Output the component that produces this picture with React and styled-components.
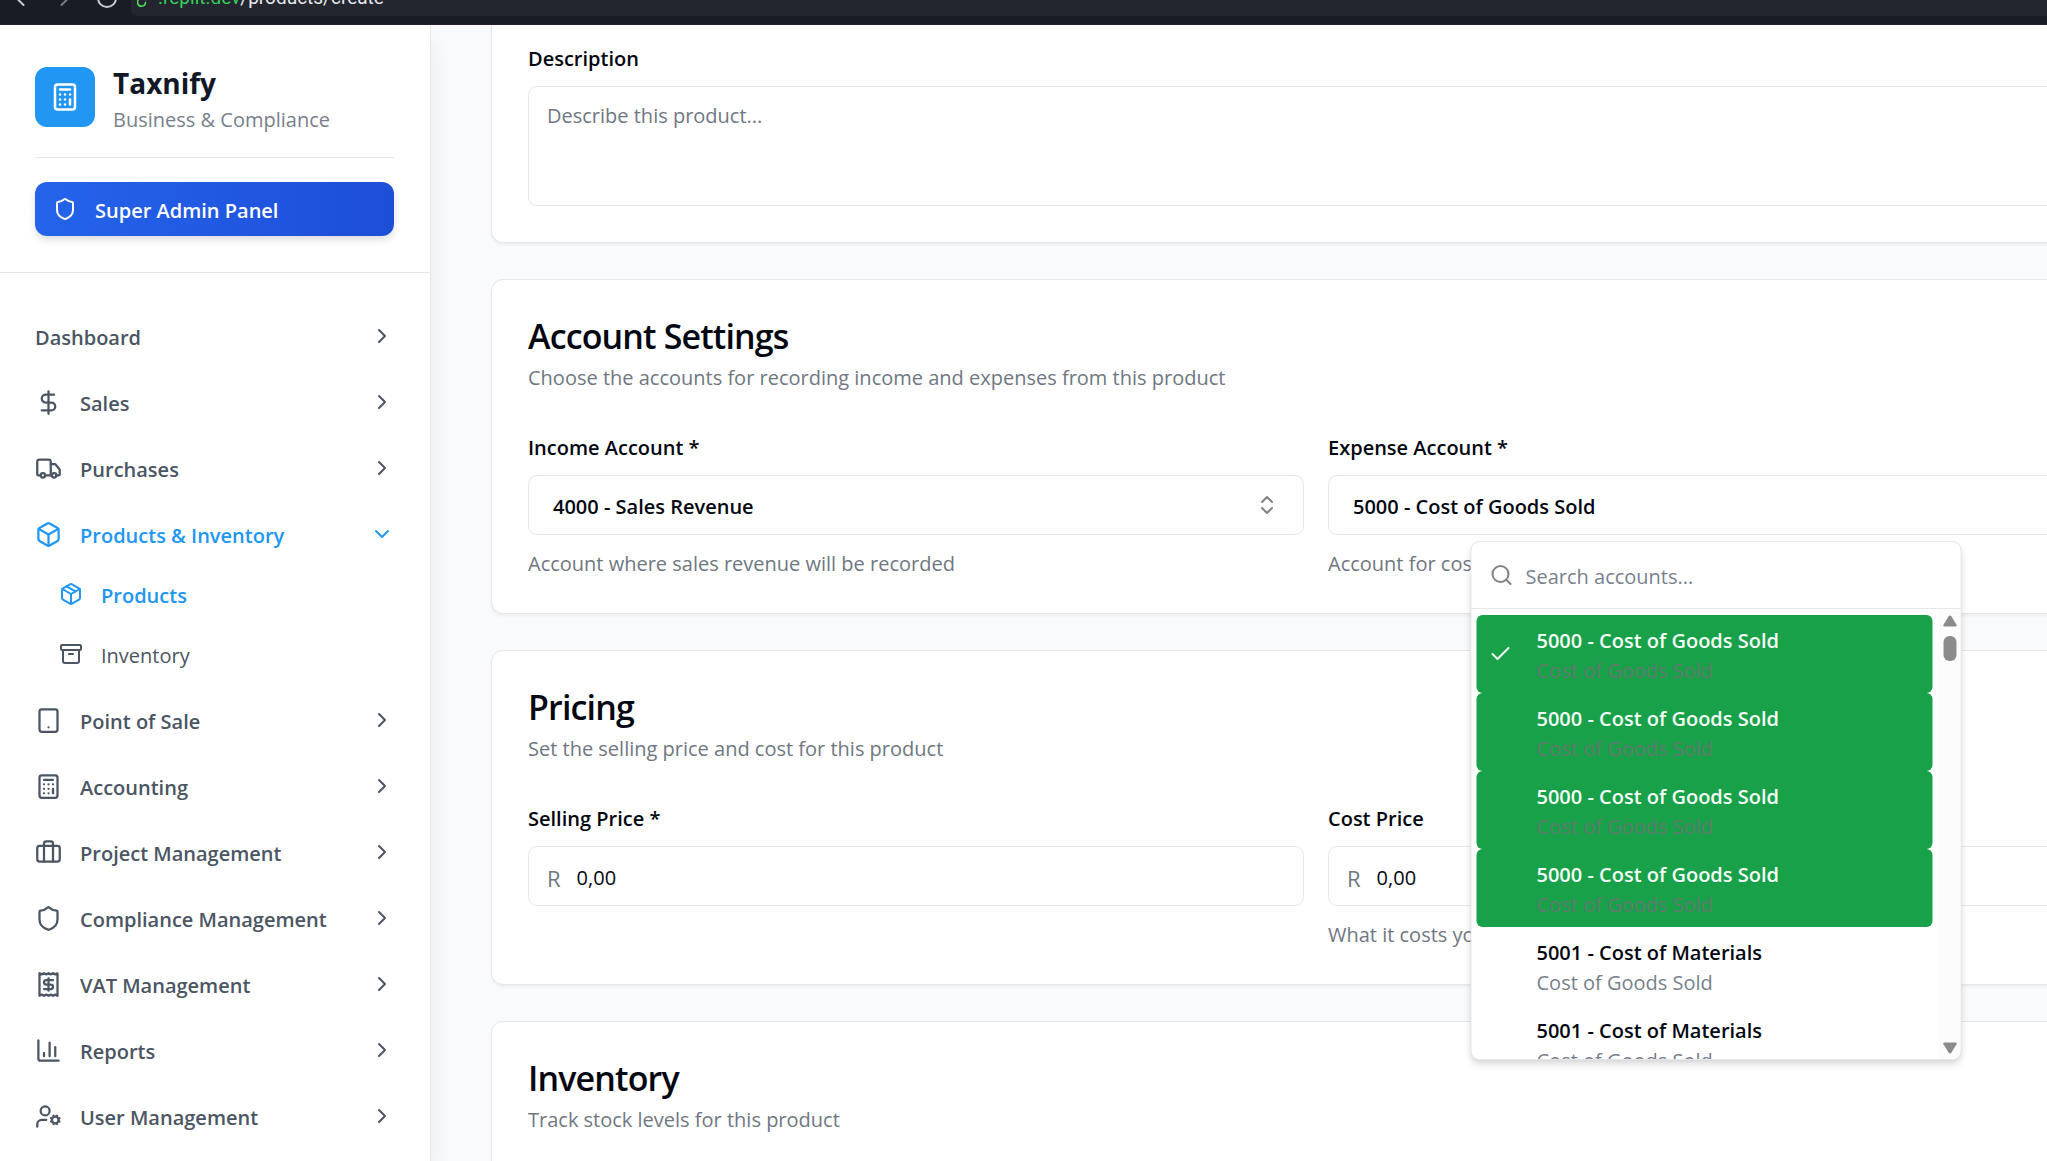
import React from "react";
import styled, { createGlobalStyle, css } from "styled-components";
import {
  Archive, Box, Briefcase, Calculator, ChartColumn, Check, ChevronDown, ChevronLeft,
  ChevronRight, ChevronsUpDown, DollarSign, Package, Receipt, RotateCw, Search,
  Shield, Tablet, Truck, UserCog,
} from "lucide-react";

const color = {
  primary: "#2196f3",
  ink: "#030711",
  heading: "#111827",
  nav: "#4b5563",
  muted: "#6f7782",
  line: "#e5e7eb",
  page: "#f8fafc",
  green: "#18a149",
};

const GlobalStyle = createGlobalStyle`
  *, *::before, *::after { box-sizing: border-box; }
  body {
    margin: 0;
    overflow: hidden;
    background: ${color.page};
    color: ${color.ink};
    font-family: "Open Sans", "Noto Sans", sans-serif;
    font-size: 20px;
    line-height: 30px;
  }
  h1, h2, p, ul { margin: 0; padding: 0; }
  ul { list-style: none; }
  a { color: inherit; text-decoration: none; }
  button, input, textarea { font: inherit; color: inherit; margin: 0; }
  svg { flex: none; display: block; }
`;

const Page = styled.div`
  display: flex;
  flex-direction: column;
  height: 100vh;
  overflow: hidden;
`;

/* Browser chrome */
const BrowserBar = styled.header`
  display: flex;
  align-items: flex-end;
  flex: none;
  height: 25px;
  padding-bottom: 8px;
  background: #1a1c25;
  border-bottom: 1px solid #2a2033;
  overflow: hidden;
`;

const BrowserButtons = styled.div`
  display: flex;
  align-items: center;
  justify-content: space-between;
  flex: none;
  width: 131px;
  height: 36px;
  padding: 0 12px 0 6px;
  color: #c9cbd1;
`;

const BrowserButton = styled.button`
  padding: 0;
  border: 0;
  background: none;
  opacity: ${(p) => (p.$dim ? 0.55 : 1)};
`;

const Address = styled.div`
  display: flex;
  align-items: center;
  flex: 1;
  gap: 8px;
  height: 36px;
  padding-left: 6px;
  border-radius: 6px 0 0 6px;
  background: #24262f;
  color: #e8eaed;
  font-family: Roboto, "Open Sans", sans-serif;
  font-size: 19px;
  svg { color: #4ade5e; }
`;

const Host = styled.span`
  color: #35d05c;
`;

/* Sidebar */
const Body = styled.div`
  display: flex;
  flex: 1;
  min-height: 0;
`;

const Sidebar = styled.aside`
  position: relative;
  z-index: 1;
  flex: none;
  width: 431px;
  background: #fff;
  border-right: 1px solid ${color.line};
  box-shadow: 0 15px 24px -4px rgba(0, 0, 0, 0.1);
`;

const SidebarHead = styled.div`
  padding: 36px 36px 36px 35px;
  border-bottom: 1px solid ${color.line};
`;

const Brand = styled.div`
  display: flex;
  align-items: center;
  gap: 18px;
  padding: 0 0 24px;
  border-bottom: 1px solid ${color.line};
`;

const Logo = styled.div`
  display: grid;
  place-items: center;
  width: 60px;
  height: 60px;
  border-radius: 12px;
  background: ${color.primary};
  color: #fff;
`;

const BrandName = styled.h1`
  padding-top: 2px;
  color: ${color.heading};
  font-size: 28px;
  line-height: 40px;
  font-weight: 700;
`;

const BrandNote = styled.p`
  padding-top: 4px;
  color: #787f8c;
  line-height: 26px;
`;

/* Text beside an icon or inside a control, seated slightly below the centre line */
const Caption = styled.span`
  flex: ${(p) => (p.$fill ? 1 : "none")};
  padding-top: 3px;
`;

const AdminButton = styled.button`
  display: flex;
  align-items: center;
  gap: 18px;
  width: 100%;
  height: 54px;
  margin-top: 24px;
  padding: 0 18px;
  border: 0;
  border-radius: 12px;
  background: linear-gradient(90deg, #2563eb, #1d4ed8);
  box-shadow: 0 4px 8px -1px rgba(0, 0, 0, 0.16);
  color: #fff;
  font-weight: 600;
`;

const Nav = styled.nav`
  padding: 30px 36px 0 35px;
`;

const itemTone = css`
  color: ${(p) => (p.$active ? color.primary : color.nav)};
`;

const NavItem = styled.a`
  display: flex;
  align-items: center;
  gap: 18px;
  height: 66px;
  font-weight: 600;
  ${itemTone}
`;

const SubList = styled.ul`
  display: flex;
  flex-direction: column;
  gap: 6px;
  padding: 0 0 6px 24px;
`;

const SubItem = styled.a`
  display: flex;
  align-items: center;
  gap: 18px;
  height: 54px;
  font-weight: ${(p) => (p.$active ? 600 : 400)};
  ${itemTone}
`;

/* Form */
const Main = styled.main`
  flex: 1;
  min-width: 0;
  padding-left: 60px;
  overflow: hidden;
`;

const Form = styled.form`
  display: flex;
  flex-direction: column;
  gap: 36px;
  min-width: 1650px;
`;

const Card = styled.section`
  padding: 36px;
  background: #fff;
  border: 1px solid ${color.line};
  border-radius: 12px;
  box-shadow: 0 2px 3px rgba(0, 0, 0, 0.05);
  ${(p) => p.$continued && css`
    padding-top: 13px;
    border-top: 0;
    border-top-left-radius: 0;
    border-top-right-radius: 0;
  `}
`;

const CardHead = styled.div`
  display: flex;
  flex-direction: column;
  gap: 9px;
  padding: 2px 0 34px;
`;

const CardTitle = styled.h2`
  font-size: 34px;
  line-height: 36px;
  font-weight: 600;
  letter-spacing: -0.025em;
`;

const Muted = styled.p`
  color: ${color.muted};
`;

const Help = styled(Muted)`
  padding-top: 4px;
  line-height: 26px;
`;

const Columns = styled.div`
  display: grid;
  grid-template-columns: 1fr 1fr;
  gap: 24px;
`;

const Field = styled.div`
  position: relative;
  display: flex;
  flex-direction: column;
  gap: 12px;
`;

const Label = styled.label`
  padding-top: 6px;
  font-weight: 600;
`;

const boxed = css`
  border: 1px solid ${color.line};
  border-radius: 9px;
  background: #fff;
`;

const TextArea = styled.textarea`
  ${boxed}
  display: block;
  width: 100%;
  height: 120px;
  padding: 14px 18px;
  resize: none;
  &::placeholder { color: ${color.muted}; opacity: 1; }
`;

const Combo = styled.button`
  ${boxed}
  display: flex;
  align-items: center;
  justify-content: space-between;
  height: 60px;
  padding: 0 24px;
  font-weight: 600;
  svg { opacity: 0.5; }
`;

const MoneyBox = styled.div`
  ${boxed}
  display: flex;
  align-items: center;
  gap: 16px;
  height: 60px;
  padding: 3px 18px 0;
`;

const Currency = styled.span`
  color: ${color.muted};
  font-size: 22px;
`;

const MoneyInput = styled.input`
  flex: 1;
  min-width: 0;
  padding: 0;
  border: 0;
  background: none;
  outline: none;
`;

/* Account picker */
const Popover = styled.div`
  position: absolute;
  z-index: 2;
  top: 114px;
  left: 50%;
  display: flex;
  flex-direction: column;
  width: 491px;
  height: 519px;
  transform: translateX(-50%);
  border: 1px solid ${color.line};
  border-radius: 9px;
  background: #fff;
  box-shadow: 0 6px 9px -1px rgba(0, 0, 0, 0.1), 0 3px 6px -2px rgba(0, 0, 0, 0.1);
  overflow: hidden;
`;

const SearchRow = styled.div`
  display: flex;
  align-items: center;
  gap: 12px;
  flex: none;
  height: 67px;
  padding: 0 18px;
  border-bottom: 1px solid ${color.line};
  svg { opacity: 0.5; }
`;

const SearchInput = styled.input`
  flex: 1;
  min-width: 0;
  padding: 3px 0 0;
  border: 0;
  outline: none;
  background: none;
  &::placeholder { color: #787f8c; opacity: 1; }
`;

const ListArea = styled.div`
  display: grid;
  grid-template-columns: 1fr 22px;
  flex: 1;
  min-height: 0;
`;

const OptionList = styled.ul`
  min-height: 0;
  padding: 6px 6px 0 5px;
  overflow: hidden;
`;

const Option = styled.li`
  display: grid;
  grid-template-columns: 24px 1fr;
  align-items: center;
  column-gap: 24px;
  height: 78px;
  padding: 0 12px;
  border-radius: 6px;
  background: ${(p) => (p.$highlighted ? color.green : "transparent")};
  color: ${(p) => (p.$highlighted ? "#f5fff8" : color.ink)};
`;

const OptionText = styled.div`
  grid-column: 2;
  grid-row: 1;
  padding-top: 3px;
`;

const OptionName = styled.div`
  font-weight: 600;
`;

const OptionKind = styled.div`
  color: ${(p) => (p.$highlighted ? "#607a70" : "#787f8c")};
`;

const ScrollRail = styled.div`
  display: flex;
  flex-direction: column;
  align-items: center;
  padding: 6px 0 5px;
  background: #fcfcfc;
`;

const Thumb = styled.div`
  width: 13px;
  height: 25px;
  margin: 9px 0 auto;
  border-radius: 6px;
  background: #8b8b8b;
`;

const navItems = [
  { text: "Dashboard" },
  { text: "Sales", icon: DollarSign },
  { text: "Purchases", icon: Truck },
  {
    text: "Products & Inventory",
    icon: Box,
    active: true,
    children: [
      { text: "Products", icon: Package, active: true },
      { text: "Inventory", icon: Archive },
    ],
  },
  { text: "Point of Sale", icon: Tablet },
  { text: "Accounting", icon: Calculator },
  { text: "Project Management", icon: Briefcase },
  { text: "Compliance Management", icon: Shield },
  { text: "VAT Management", icon: Receipt },
  { text: "Reports", icon: ChartColumn },
  { text: "User Management", icon: UserCog },
];

const accounts = [
  { name: "5000 - Cost of Goods Sold", highlighted: true, selected: true },
  { name: "5000 - Cost of Goods Sold", highlighted: true },
  { name: "5000 - Cost of Goods Sold", highlighted: true },
  { name: "5000 - Cost of Goods Sold", highlighted: true },
  { name: "5001 - Cost of Materials" },
  { name: "5001 - Cost of Materials" },
];

function Chrome() {
  return (
    <BrowserBar>
      <BrowserButtons>
        <BrowserButton type="button" aria-label="Back"><ChevronLeft size={28} strokeWidth={1.7} /></BrowserButton>
        <BrowserButton type="button" aria-label="Forward" $dim><ChevronRight size={28} strokeWidth={1.7} /></BrowserButton>
        <BrowserButton type="button" aria-label="Reload"><RotateCw size={24} strokeWidth={2} /></BrowserButton>
      </BrowserButtons>
      <Address>
        <svg width="13" height="20" viewBox="0 0 13 20" fill="none" stroke="currentColor" strokeWidth="1.6" strokeLinecap="round">
          <path d="M3 10.500a4 4 0 1 0 5.500 4" />
          <path d="M8.500 11.500l3 -1" />
        </svg>
        <span><Host>.replit.dev</Host>/products/create</span>
      </Address>
    </BrowserBar>
  );
}

function NavEntry({ item }) {
  const Icon = item.icon;
  const Arrow = item.children ? ChevronDown : ChevronRight;
  return (
    <li>
      <NavItem href="#" $active={item.active}>
        {Icon && <Icon size={27} />}
        <Caption $fill>{item.text}</Caption>
        <Arrow size={24} />
      </NavItem>
      {item.children && (
        <SubList>
          {item.children.map((sub) => (
            <li key={sub.text}>
              <SubItem href="#" $active={sub.active}>
                <sub.icon size={24} />
                <Caption>{sub.text}</Caption>
              </SubItem>
            </li>
          ))}
        </SubList>
      )}
    </li>
  );
}

function CardHeading({ title, note }) {
  return (
    <CardHead>
      <CardTitle>{title}</CardTitle>
      <Muted>{note}</Muted>
    </CardHead>
  );
}

function ComboField({ id, label, value, help, children }) {
  return (
    <Field>
      <Label htmlFor={id}>{label}</Label>
      <Combo id={id} type="button" aria-haspopup="listbox">
        <Caption>{value}</Caption>
        <ChevronsUpDown size={24} />
      </Combo>
      <Help>{help}</Help>
      {children}
    </Field>
  );
}

function MoneyField({ id, label, help }) {
  return (
    <Field>
      <Label htmlFor={id}>{label}</Label>
      <MoneyBox>
        <Currency>R</Currency>
        <MoneyInput id={id} defaultValue="0,00" inputMode="decimal" />
      </MoneyBox>
      {help && <Help>{help}</Help>}
    </Field>
  );
}

function AccountPicker() {
  return (
    <Popover>
      <SearchRow>
        <Search size={24} />
        <SearchInput aria-label="Search accounts" placeholder="Search accounts..." />
      </SearchRow>
      <ListArea>
        <OptionList role="listbox" aria-label="Accounts">
          {accounts.map((a, i) => (
            <Option key={i} role="option" aria-selected={!!a.selected} $highlighted={a.highlighted}>
              {a.selected && <Check size={24} />}
              <OptionText>
                <OptionName>{a.name}</OptionName>
                <OptionKind $highlighted={a.highlighted}>Cost of Goods Sold</OptionKind>
              </OptionText>
            </Option>
          ))}
        </OptionList>
        <ScrollRail>
          <svg width="15" height="12" viewBox="0 0 15 12" fill="#8b8b8b">
            <path d="M7.500 0.500Q8.300 0.500 8.800 1.300L14 9.800Q14.800 11.500 13.400 11.500H1.600Q0.200 11.500 1 9.800L6.200 1.300Q6.700 0.500 7.500 0.500Z" />
          </svg>
          <Thumb />
          <svg width="15" height="12" viewBox="0 0 15 12" fill="#8b8b8b">
            <path d="M7.500 11.500Q8.300 11.500 8.800 10.700L14 2.200Q14.800 0.500 13.400 0.500H1.600Q0.200 0.500 1 2.200L6.200 10.700Q6.700 11.500 7.500 11.500Z" />
          </svg>
        </ScrollRail>
      </ListArea>
    </Popover>
  );
}

export default function App() {
  return (
    <Page>
      <GlobalStyle />
      <Chrome />
      <Body>
        <Sidebar>
          <SidebarHead>
            <Brand>
              <Logo><Calculator size={30} /></Logo>
              <div>
                <BrandName>Taxnify</BrandName>
                <BrandNote>Business &amp; Compliance</BrandNote>
              </div>
            </Brand>
            <AdminButton type="button">
              <Shield size={24} />
              <Caption>Super Admin Panel</Caption>
            </AdminButton>
          </SidebarHead>
          <Nav>
            <ul>
              {navItems.map((item) => <NavEntry key={item.text} item={item} />)}
            </ul>
          </Nav>
        </Sidebar>
        <Main>
          <Form onSubmit={(e) => e.preventDefault()}>
            <Card $continued>
              <Field>
                <Label htmlFor="description">Description</Label>
                <TextArea id="description" placeholder="Describe this product..." />
              </Field>
            </Card>
            <Card>
              <CardHeading title="Account Settings" note="Choose the accounts for recording income and expenses from this product" />
              <Columns>
                <ComboField id="income" label="Income Account *" value="4000 - Sales Revenue" help="Account where sales revenue will be recorded" />
                <ComboField id="expense" label="Expense Account *" value="5000 - Cost of Goods Sold" help="Account for cost of goods">
                  <AccountPicker />
                </ComboField>
              </Columns>
            </Card>
            <Card>
              <CardHeading title="Pricing" note="Set the selling price and cost for this product" />
              <Columns>
                <MoneyField id="selling" label="Selling Price *" />
                <MoneyField id="cost" label="Cost Price" help="What it costs you" />
              </Columns>
            </Card>
            <Card>
              <CardHeading title="Inventory" note="Track stock levels for this product" />
            </Card>
          </Form>
        </Main>
      </Body>
    </Page>
  );
}
